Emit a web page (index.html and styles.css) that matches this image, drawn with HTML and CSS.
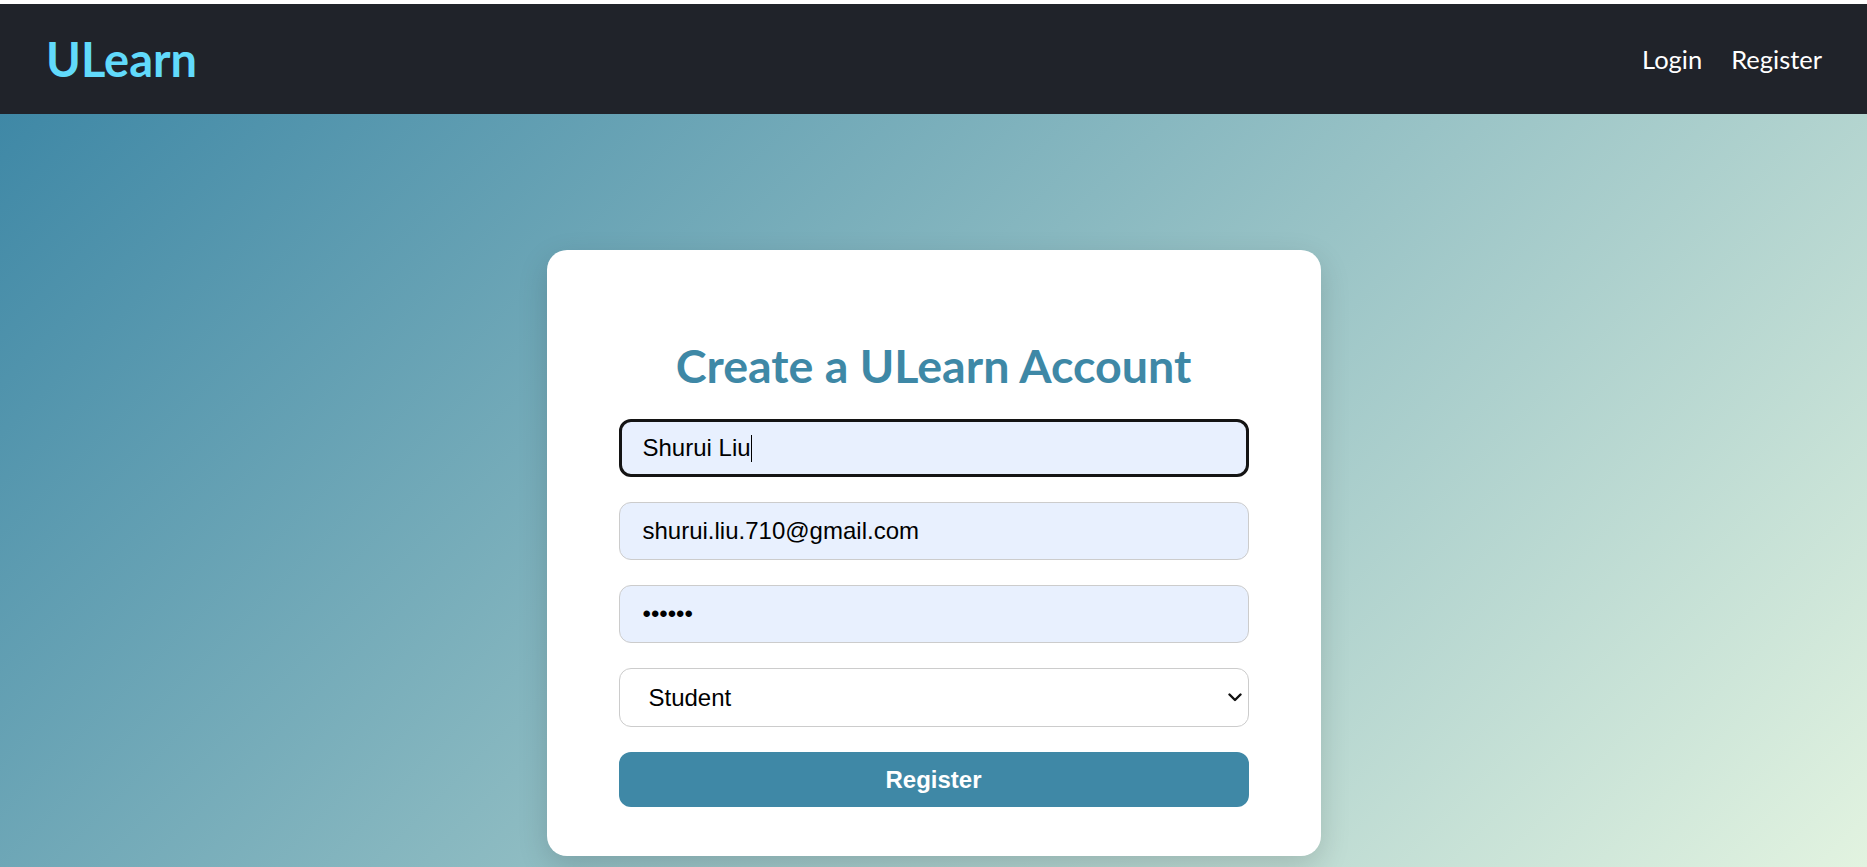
FILE: index.html
```html
<!DOCTYPE html>
<html lang="en">
<head>
<meta charset="utf-8">
<title>ULearn - Register</title>
<link rel="stylesheet" href="styles.css">
</head>
<body>
  <header class="topbar">
    <a class="brand" href="#">ULearn</a>
    <nav class="nav">
      <a class="nav-link" href="#">Login</a>
      <a class="nav-link" href="#">Register</a>
    </nav>
  </header>
  <main class="stage">
    <form class="card">
      <h2 class="card-title">Create a ULearn Account</h2>
      <div class="field-wrap">
        <input class="field field-focused" type="text" value="Shurui Liu">
        <span class="caret"></span>
      </div>
      <input class="field" type="email" value="shurui.liu.710@gmail.com">
      <input class="field" type="password" value="123456">
      <div class="field-wrap">
        <select class="field field-select">
          <option>Student</option>
          <option>Instructor</option>
        </select>
        <svg class="chevron" width="14" height="9" viewBox="0 0 14 9" aria-hidden="true">
          <path d="M1.5 1.5 L7 7 L12.5 1.5" fill="none" stroke="#111111" stroke-width="2.4" stroke-linecap="round" stroke-linejoin="round"/>
        </svg>
      </div>
      <button class="submit" type="button">Register</button>
    </form>
  </main>
</body>
</html>
```
FILE: styles.css
```css
html, body {
  margin: 0;
  padding: 0;
}

body {
  padding-top: 4px;
  background: #ffffff;
  font-family: "Lato", "Noto Sans", sans-serif;
  overflow: hidden;
}

.topbar {
  height: 110px;
  background: #20232a;
  display: flex;
  align-items: center;
  justify-content: space-between;
  padding: 0 45px 0 46px;
}

.brand {
  font-family: "Lato", sans-serif;
  font-weight: 700;
  font-size: 47px;
  color: #61dafb;
  text-decoration: none;
  line-height: 1;
}

.nav {
  display: flex;
  gap: 29px;
}

.nav-link {
  color: #ffffff;
  text-decoration: none;
  font-size: 25.5px;
  font-family: "Lato", sans-serif;
}

.stage {
  height: calc(100vh - 114px);
  box-sizing: border-box;
  background: linear-gradient(135deg, #3f88a6 0%, #e2f3e0 100%);
  display: flex;
  justify-content: center;
  align-items: flex-start;
  padding-top: 136px;
}

.card {
  width: 774px;
  box-sizing: border-box;
  padding: 86px 72px 49px;
  background: #ffffff;
  border-radius: 20px;
  box-shadow: 0 10px 30px rgba(0, 0, 0, 0.15);
  display: flex;
  flex-direction: column;
  gap: 25px;
}

.card-title {
  margin: 0;
  font-family: "Lato", sans-serif;
  font-weight: 700;
  font-size: 46.6px;
  line-height: 58px;
  color: #3e88a6;
  text-align: center;
}

.field-wrap {
  position: relative;
  display: flex;
}

.field {
  width: 100%;
  height: 58px;
  box-sizing: border-box;
  border: 1px solid #cccccc;
  border-radius: 12px;
  padding: 0 23px;
  font-family: "Liberation Sans", Arial, sans-serif;
  font-size: 24px;
  color: #000000;
  background: #e8f0fe;
  margin: 0;
  outline: none;
}

.field-focused {
  border: 3px solid #141414;
  padding-left: 21px;
}

.caret {
  position: absolute;
  left: 132px;
  top: 16px;
  width: 1px;
  height: 27px;
  background: #000000;
}

.field-select {
  -webkit-appearance: none;
  appearance: none;
  height: 59px;
  background: #ffffff;
  padding-left: 29px;
  padding-right: 40px;
}

.chevron {
  position: absolute;
  right: 7px;
  top: 25px;
  pointer-events: none;
}

.submit {
  height: 55px;
  border: none;
  border-radius: 12px;
  background: #3f88a6;
  color: #ffffff;
  font-family: "Liberation Sans", Arial, sans-serif;
  font-weight: 700;
  font-size: 24px;
  cursor: pointer;
}
```
